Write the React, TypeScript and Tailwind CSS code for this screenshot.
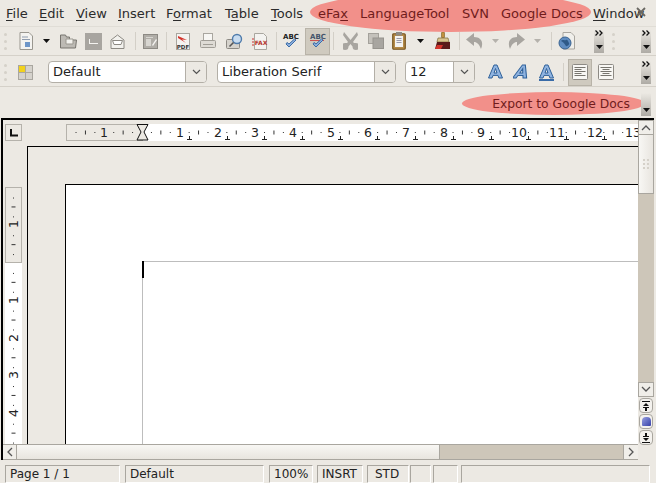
import React from "react";

const Sep = ({ w }: { w: string }) => (
  <div className={`${w} flex justify-center shrink-0`}>
    <div className="w-px h-[18px] bg-[#d3cfc7]" />
  </div>
);

const Grip = () => (
  <div className="flex flex-col gap-[4px]">
    <div className="w-[3px] h-[3px] rounded-full bg-[#d5d1c9]" />
    <div className="w-[3px] h-[3px] rounded-full bg-[#d5d1c9]" />
    <div className="w-[3px] h-[3px] rounded-full bg-[#d5d1c9]" />
  </div>
);

const Drop = ({ dim }: { dim?: boolean }) => (
  <svg width="7" height="4" viewBox="0 0 7 4">
    <path d="M0 0h7L3.5 4z" fill={dim ? "#b5b2ac" : "#111"} />
  </svg>
);

const Chevrons = ({ top = true }: { top?: boolean }) => (
  <div className="w-[10px] h-[23px] shrink-0 flex flex-col items-center justify-between pb-[4px] bg-gradient-to-b from-[#ece9e3] to-[#aeaba5]">
    {top ? (
      <svg width="9" height="6" viewBox="0 0 9 6">
        <path d="M0.5 0.5L3 3L0.5 5.5M4.5 0.5L7 3L4.5 5.5" fill="none" stroke="#111" strokeWidth="1.3" />
      </svg>
    ) : (
      <span />
    )}
    <Drop />
  </div>
);

const Slot = ({ w, children, cls = "" }: { w: string; children?: React.ReactNode; cls?: string }) => (
  <div className={`${w} ${cls} shrink-0 flex items-center justify-center`}>{children}</div>
);

const Icon = ({ children, w = 18, h = 18 }: { children: React.ReactNode; w?: number; h?: number }) => (
  <svg width={w} height={h} viewBox={`0 0 ${w} ${h}`}>{children}</svg>
);

const AbcLabel = ({ red }: { red?: boolean }) => (
  <Icon w={18} h={18}>
    <text x="9" y="6.5" textAnchor="middle" fontSize="7" fontWeight="700" fontFamily="'DejaVu Sans', sans-serif" fill={red ? "#44546a" : "#222"}>ABC</text>
    {red && <path d="M1 8l1 1 1-1 1 1 1-1 1 1 1-1 1 1 1-1 1 1 1-1 1 1 1-1 1 1 1-1" fill="none" stroke="#c33" strokeWidth="0.8" />}
    <path d="M4 12l3 3 7-7-1.5-1-5.5 5-2-1.5z" fill="#8fb0dc" stroke="#3a6ca8" strokeWidth="1" />
  </Icon>
);

const BigA = ({ italic, under }: { italic?: boolean; under?: boolean }) => (
  <Icon w={18} h={18}>
    <g transform={italic ? "translate(3 0) skewX(-18)" : undefined}>
      <path d="M1.5 15L7 2h3l5.5 13h-3.6l-.9-2.6H6L5 15zM7 10h3L8.5 5.5z" fill="#8fb3e0" stroke="#2f6199" strokeWidth="1" />
    </g>
    {under && <rect x="1" y="16" width="15" height="2" fill="#3a6ca8" />}
  </Icon>
);

const AlignIcon = ({ center }: { center?: boolean }) => (
  <Icon w={16} h={16}>
    <rect x="0.5" y="0.5" width="15" height="15" rx="1" fill="#f8f7f4" stroke="#8d8a84" />
    {[3.5, 5.5, 7.5, 9.5, 11.5].map((y, i) => {
      const len = i % 2 ? 7 : 11;
      const x = center ? 8 - len / 2 : 2.5;
      return <line key={y} x1={x} x2={x + len} y1={y} y2={y} stroke="#77756f" strokeWidth="1" />;
    })}
  </Icon>
);

const Combo = ({ label, w, tw }: { label: string; w: string; tw: string }) => (
  <div className={`${w} h-[22px] shrink-0 flex bg-white border border-[#b3afa7] rounded-[4px] overflow-hidden`}>
    <div className="flex-1 pl-[4px] flex items-center text-[13px] text-[#222]">{label}</div>
    <div className={`${tw} shrink-0 flex items-center justify-center bg-[#ece9e3] border-l border-[#b3afa7]`}>
      <svg width="9" height="6" viewBox="0 0 9 6">
        <path d="M1 1l3.5 3.5L8 1" fill="none" stroke="#555" strokeWidth="1.2" />
      </svg>
    </div>
  </div>
);

const MenuItem = ({ w, u, rest, pre = "", red }: { w: string; u: string; rest: string; pre?: string; red?: boolean }) => (
  <div className={`${w} shrink-0 whitespace-nowrap ${red ? "text-[#701c1c]" : "text-[#2b2b2b]"}`}>
    {pre}
    {u && <span className="underline underline-offset-2">{u}</span>}
    {rest}
  </div>
);

const ticksH = () => {
  const out: React.ReactNode[] = [];
  const unit = 37.7;
  const origin = 142;
  for (let i = -2; i <= 13; i++) {
    const x0 = origin + i * unit;
    [0.25, 0.5, 0.75].forEach((f) => {
      const x = x0 + f * unit;
      if (x > 67 && x < 638) {
        out.push(
          f === 0.5 ? (
            <line key={`${i}-${f}`} x1={x - 66} x2={x - 66} y1="6.5" y2="10.5" stroke="#333" strokeWidth="1" />
          ) : (
            <rect key={`${i}-${f}`} x={x - 66.5} y="8" width="1" height="1" fill="#333" />
          )
        );
      }
    });
  }
  for (let x = 189; x < 638; x += 37.7) {
    const rx = Math.round(x) - 66;
    out.push(<path key={`t${x}`} d={`M${rx + 0.5} 12v4M${rx - 2} 15.5h5`} stroke="#222" strokeWidth="1" fill="none" />);
  }
  return out;
};

const labelsH: [string, number][] = [
  ["1", 104], ["1", 180], ["2", 218], ["3", 255], ["4", 293], ["5", 331], ["6", 368],
  ["7", 406], ["8", 444], ["9", 481], ["10", 519], ["11", 557], ["12", 595], ["13", 633],
];

const HRuler = () => (
  <svg width="572" height="18" viewBox="0 0 572 18" className="block shrink-0">
    <rect x="76" y="0" width="496" height="17" fill="#fff" />
    <rect x="0.5" y="0.5" width="76" height="16" fill="#ece9e3" stroke="#b5b2ab" />
    {ticksH()}
    {labelsH.map(([t, x]) => (
      <text key={x} x={x - 66} y="13" textAnchor="middle" fontSize="12.5" fontFamily="'DejaVu Sans', sans-serif" fill="#222">{t}</text>
    ))}
    <path d="M71 0.5h11l-4 7.5 4 8H71l4-8z" fill="#ece9e3" stroke="#111" strokeWidth="1" />
  </svg>
);

const VRuler = () => {
  const items: React.ReactNode[] = [];
  const unit = 37.7;
  for (let i = -2; i < 5; i++) {
    [0.25, 0.5, 0.75].forEach((f) => {
      const y = 117 + i * unit + f * unit + 0.5;
      if (y > 40 && y < 300) {
        items.push(
          f === 0.5 ? (
            <line key={`${i}-${f}`} x1="6.5" x2="10.5" y1={y} y2={y} stroke="#333" />
          ) : (
            <rect key={`${i}-${f}`} x="8" y={y} width="1" height="1" fill="#333" />
          )
        );
      }
    });
  }
  const labels: [string, number][] = [["1", 78], ["1", 154], ["2", 192], ["3", 229], ["4", 267]];
  return (
    <svg width="17" height="301" viewBox="0 0 17 301" className="block">
      <rect x="0" y="117" width="17" height="184" fill="#fff" />
      <rect x="0.5" y="41.5" width="16" height="75" fill="#ece9e3" stroke="#b5b2ab" />
      {items}
      {labels.map(([t, y], i) => (
        <text key={i} x="0" y="0" transform={`translate(13 ${y}) rotate(-90)`} textAnchor="middle" fontSize="12.5" fontFamily="'DejaVu Sans', sans-serif" fill="#222">{t}</text>
      ))}
    </svg>
  );
};

const Cell = ({ w, children, cls = "" }: { w: string; children?: React.ReactNode; cls?: string }) => (
  <div className={`${w} ${cls} h-[18px] shrink-0 flex items-center pl-[4px] border border-t-[#a9a69f] border-l-[#a9a69f] border-r-white border-b-white text-[12px] text-[#222] whitespace-nowrap`}>
    {children}
  </div>
);

const SmallNav = ({ children, cls = "" }: { children: React.ReactNode; cls?: string }) => (
  <div className={`w-[14px] h-[15px] ml-px flex items-center justify-center rounded-[4px] border border-[#a9a69f] bg-[#f4f2ee] ${cls}`}>{children}</div>
);

export default function App() {
  return (
    <div className="relative w-[656px] h-[483px] overflow-hidden bg-[#ece9e3] flex flex-col" style={{ fontFamily: "'DejaVu Sans', sans-serif" }}>
      {/* annotation ellipses */}
      <div className="absolute left-[310px] top-[-8px] w-[281px] h-[40px] rounded-[50%] bg-[#f2908a] z-10" />
      <div className="absolute left-[462px] top-[92px] w-[183px] h-[23px] rounded-[50%] bg-[#f2908a] z-10" />

      {/* menu */}
      <div className="relative z-20 h-[26px] shrink-0 flex items-center pl-[6px] pt-[1px] text-[13px]">
        <MenuItem w="w-[33px]" u="F" rest="ile" />
        <MenuItem w="w-[37px]" u="E" rest="dit" />
        <MenuItem w="w-[42px]" u="V" rest="iew" />
        <MenuItem w="w-[48px]" u="I" rest="nsert" />
        <MenuItem w="w-[59px]" pre="F" u="o" rest="rmat" />
        <MenuItem w="w-[46px]" pre="T" u="a" rest="ble" />
        <MenuItem w="w-[47px]" u="T" rest="ools" />
        <MenuItem w="w-[42px]" pre="eFa" u="x" rest="" red />
        <MenuItem w="w-[102px]" u="" rest="LanguageTool" red />
        <MenuItem w="w-[39px]" u="" rest="SVN" red />
        <MenuItem w="w-[92px]" u="" rest="Google Docs" red />
        <MenuItem w="w-[44px]" u="W" rest="indow" />
        <div className="absolute left-[636px] top-[6px]">
          <svg width="10" height="12" viewBox="0 0 10 12">
            <path d="M1 2l8 8M9 2l-8 8" stroke="#6a6862" strokeWidth="1.8" />
          </svg>
        </div>
      </div>

      {/* toolbar 1 */}
      <div className="h-[30px] shrink-0 flex items-center border-t border-[#e0ddd6] border-b border-b-[#d5d1c9]">
        <Slot w="w-[14px]" cls="!justify-start pl-[4px]"><Grip /></Slot>
        <Slot w="w-[23px]">
          <Icon w={14} h={18}>
            <path d="M1 .5h9l3.5 3.5v13.5H1z" fill="#f4f3f0" stroke="#9a978f" />
            <path d="M3 5h6M3 7.5h8" stroke="#8f9cae" />
            <rect x="6" y="10" width="5" height="5" fill="#6e96c8" />
          </Icon>
        </Slot>
        <Slot w="w-[18px]"><Drop /></Slot>
        <Slot w="w-[26px]">
          <Icon w={17} h={15}>
            <path d="M.5 14V1h5l1 2h3v3h7l-1 8z" fill="#bdbab4" stroke="#77746e" />
            <path d="M6 5h7v5H6z" fill="#f3f2ee" stroke="#9a978f" />
          </Icon>
        </Slot>
        <Slot w="w-[24px]">
          <div className="w-[17px] h-[17px] bg-[#a8a5a0] relative flex items-start justify-center">
            <div className="w-[9px] h-[5px] mt-[6px] border-l border-b border-[#f4f3f0]" />
          </div>
        </Slot>
        <Slot w="w-[24px]">
          <Icon w={15} h={15}>
            <path d="M1 6L7.5 1 14 6v8.5H1z" fill="#f2f1ed" stroke="#8d8a84" />
            <path d="M2.5 6.5h10L11 10.5H4z" fill="#fff" stroke="#8d8a84" />
          </Icon>
        </Slot>
        <Sep w="w-[12px]" />
        <Slot w="w-[18px]">
          <Icon w={15} h={15}>
            <rect x=".5" y=".5" width="14" height="14" fill="#b0ada7" stroke="#8d8a84" />
            <path d="M3 3h7v1H3zM3 5h5v7H3z" fill="#d8d6d1" />
            <path d="M9 11l4-6 1 1-4 6z" fill="#f4f3f0" />
          </Icon>
        </Slot>
        <Sep w="w-[14px]" />
        <Slot w="w-[20px]">
          <Icon w={14} h={17}>
            <rect x=".5" y=".5" width="13" height="16" fill="#f4f3f0" stroke="#a9a69f" />
            <path d="M2 3l9 4-5-.5 4 3.5-8-5z" fill="#d4342c" />
            <text x="7" y="15.5" textAnchor="middle" fontSize="5.5" fontWeight="700" fontFamily="'DejaVu Sans', sans-serif" fill="#333">PDF</text>
          </Icon>
        </Slot>
        <Slot w="w-[30px]">
          <Icon w={16} h={16}>
            <rect x="3.5" y=".5" width="9" height="7" fill="#f7f6f3" stroke="#a9a69f" />
            <rect x=".5" y="7.5" width="15" height="7" rx="1" fill="#dedbd5" stroke="#a09d96" />
            <path d="M3 11.5h10" stroke="#a09d96" />
          </Icon>
        </Slot>
        <Slot w="w-[24px]">
          <Icon w={18} h={17}>
            <rect x=".5" y="6.5" width="13" height="9" rx="1" fill="#d5d2cc" stroke="#8d8a84" />
            <circle cx="11" cy="6" r="4.5" fill="#c8dcf0" stroke="#4f7bab" strokeWidth="1.4" />
            <path d="M7.5 9.5l-4 4" stroke="#555" strokeWidth="1.6" />
          </Icon>
        </Slot>
        <Slot w="w-[26px]">
          <Icon w={17} h={17}>
            <path d="M2.5.5h9l3 3v13h-12z" fill="#f4f3f0" stroke="#a9a69f" />
            <text x="9" y="12" textAnchor="middle" fontSize="6" fontWeight="700" fontFamily="'DejaVu Sans', sans-serif" fill="#b5332e">FAX</text>
            <path d="M0 6h2M0 9h2M0 12h2" stroke="#c33" />
          </Icon>
        </Slot>
        <Sep w="w-[6px]" />
        <Slot w="w-[24px]"><AbcLabel /></Slot>
        <Slot w="w-[25px]" cls="ml-[2px] h-[27px] bg-[#cfcabf] border border-[#b8b3a8]"><AbcLabel red /></Slot>
        <Sep w="w-[6px]" />
        <Slot w="w-[28px]">
          <Icon w={15} h={18}>
            <path d="M1 0l6.5 8L14 0l1 3-5 7 1 1h2a3.5 3.5 0 1 1-3.5 3.5L7.5 12 5.500 14.500A3.500 3.500 0 1 1 2 11h2l1-1-5-7z" fill="#a8a5a0" />
          </Icon>
        </Slot>
        <Slot w="w-[23px]">
          <Icon w={16} h={16}>
            <rect x=".5" y=".5" width="10" height="10" fill="#c4c1bb" stroke="#a4a19b" />
            <rect x="5" y="5" width="10.5" height="10.5" fill="#a8a5a0" stroke="#96938d" />
          </Icon>
        </Slot>
        <Slot w="w-[24px]">
          <Icon w={14} h={18}>
            <rect x=".75" y="1.75" width="12.5" height="15.500" rx="1" fill="#b48a48" stroke="#76531e" strokeWidth="1.2" />
            <rect x="3" y="4" width="8" height="11" fill="#f4f3f0" />
            <rect x="4" y="0" width="6" height="3.5" fill="#8d8a84" />
            <path d="M4.5 6.5h5M4.5 8.5h5M4.5 10.5h5" stroke="#99a" />
          </Icon>
        </Slot>
        <Slot w="w-[18px]"><Drop /></Slot>
        <Slot w="w-[28px]">
          <Icon w={16} h={18}>
            <rect x="6.5" y="0" width="3" height="6" rx="1" fill="#c2913f" stroke="#7b5c22" strokeWidth=".6" />
            <path d="M3 6h10l1 4H2z" fill="#d9c48e" stroke="#7b6a3a" strokeWidth=".7" />
            <path d="M2 10h13v7H0z" fill="#5a1a1a" />
            <path d="M0 17l2-4h6l-2 4z" fill="#d4342c" />
          </Icon>
        </Slot>
        <Sep w="w-[4px]" />
        <Slot w="w-[26px]">
          <Icon w={17} h={16}>
            <path d="M8 0L0 6.500l8 6.500V9c3 0 5 2 7 7 3-7 0-12-7-12z" fill="#a8a5a0" />
          </Icon>
        </Slot>
        <Slot w="w-[16px]"><Drop dim /></Slot>
        <Slot w="w-[26px]">
          <Icon w={17} h={16}>
            <path d="M9 0l8 6.500L9 13V9c-3 0-5 2-7 7C-1 9 2 4 9 4z" fill="#a8a5a0" />
          </Icon>
        </Slot>
        <Slot w="w-[16px]"><Drop dim /></Slot>
        <Sep w="w-[12px]" />
        <Slot w="w-[18px]">
          <Icon w={17} h={18}>
            <path d="M5 .5h8l3.500 3.500v13H5z" fill="#f0efeb" stroke="#a9a69f" />
            <circle cx="7" cy="11" r="6" fill="#5f8cc0" stroke="#3a6492" />
            <path d="M3 9c2-2 3 0 5-1s2 2 3 3-2 4-3 3-1-3-5-5z" fill="#2f5a88" />
          </Icon>
        </Slot>
        <div className="w-[19px] shrink-0" />
        <Chevrons />
        <Slot w="w-[18px]"><Grip /></Slot>
        <div className="w-[19px] shrink-0" />
        <Chevrons />
      </div>

      {/* toolbar 2 */}
      <div className="h-[31px] shrink-0 flex items-center pt-[2px] border-b border-[#d5d1c9]">
        <Slot w="w-[14px]" cls="!justify-start pl-[4px]"><Grip /></Slot>
        <Slot w="w-[23px]">
          <div className="grid grid-cols-2 gap-px w-[15px] h-[15px] bg-[#a9a69f] border border-[#a9a69f]">
            <div className="bg-[#f2d21c]" />
            <div className="bg-[#d5d2cc]" />
            <div className="bg-[#d5d2cc]" />
            <div className="bg-[#d5d2cc]" />
          </div>
        </Slot>
        <div className="w-[11px] shrink-0" />
        <Combo label="Default" w="w-[159px]" tw="w-[21px]" />
        <div className="w-[10px] shrink-0" />
        <Combo label="Liberation Serif" w="w-[179px]" tw="w-[21px]" />
        <div className="w-[9px] shrink-0" />
        <Combo label="12" w="w-[70px]" tw="w-[21px]" />
        <Slot w="w-[21px]" cls="ml-[10px]"><BigA /></Slot>
        <Slot w="w-[27px]" cls="ml-[2px]"><BigA italic /></Slot>
        <Slot w="w-[23px]"><BigA under /></Slot>
        <Sep w="w-[10px]" />
        <Slot w="w-[24px]" cls="h-[27px] bg-[#cfcabf] border border-[#b8b3a8]"><AlignIcon /></Slot>
        <Slot w="w-[27px]"><AlignIcon center /></Slot>
        <div className="w-[22px] shrink-0" />
        <Chevrons />
      </div>

      {/* toolbar 3 */}
      <div className="relative z-20 h-[31px] shrink-0 flex items-center justify-end pr-[5px]">
        <div className="text-[12.3px] pt-[3px] text-[#701c1c] mr-[11px] whitespace-nowrap">Export to Google Docs</div>
        <div className="self-end mb-[2px]"><Chevrons top={false} /></div>
      </div>

      {/* editor */}
      <div className="flex-1 min-h-0 flex flex-col pl-[1px] pr-[2px]">
        <div className="flex-1 min-h-0 flex border-t-2 border-l-2 border-black">
          <div className="flex-1 min-w-0 flex flex-col">
            {/* horizontal ruler row */}
            <div className="h-[26px] shrink-0 flex pt-[4px]">
              <div className="ml-[2px] w-[17px] h-[17px] flex items-center justify-center border border-[#b5b2ab] shrink-0">
                <svg width="8" height="8" viewBox="0 0 8 8"><path d="M1 0v6.5h7" fill="none" stroke="#111" strokeWidth="2" /></svg>
              </div>
              <div className="ml-[44px]"><HRuler /></div>
            </div>
            {/* work row */}
            <div className="flex-1 min-h-0 flex">
              <div className="w-[24px] shrink-0 pl-[2px] overflow-hidden"><VRuler /></div>
              <div className="flex-1 min-w-0 border-t border-l border-black pl-[37px] pt-[37px]">
                <div className="h-full border-t border-l border-black bg-white pl-[76px] pt-[76px]">
                  <div className="relative h-full border-t border-l border-[#bdbdbd]">
                    <div className="absolute left-[-1px] top-[-1px] w-[2px] h-[17px] bg-black" />
                  </div>
                </div>
              </div>
            </div>
            {/* horizontal scrollbar */}
            <div className="h-[16px] shrink-0 flex border-t border-b border-[#a9a69f]">
              <div className="w-[14px] shrink-0 flex items-center justify-center bg-[#f0eee9] border-r border-[#a9a69f]">
                <svg width="7" height="10" viewBox="0 0 7 10"><path d="M6 1L2 5l4 4" fill="none" stroke="#555" strokeWidth="1.3" /></svg>
              </div>
              <div className="w-[423px] shrink-0 bg-gradient-to-b from-[#f8f7f4] to-[#e8e5df] border-r border-[#a9a69f]" />
              <div className="flex-1 bg-[#cdc6b9]" />
              <div className="w-[15px] shrink-0 flex items-center justify-center bg-[#f0eee9] border-l border-[#a9a69f]">
                <svg width="7" height="10" viewBox="0 0 7 10"><path d="M1 1l4 4-4 4" fill="none" stroke="#555" strokeWidth="1.3" /></svg>
              </div>
            </div>
          </div>
          {/* vertical scrollbar */}
          <div className="w-[16px] shrink-0 flex flex-col pb-[15px]">
            <div className="h-[15px] shrink-0 flex items-center justify-center bg-[#f0eee9] border border-[#a9a69f]">
              <svg width="10" height="7" viewBox="0 0 10 7"><path d="M1 6l4-4 4 4" fill="none" stroke="#555" strokeWidth="1.3" /></svg>
            </div>
            <div className="h-[59px] shrink-0 flex items-center justify-center bg-gradient-to-r from-[#f8f7f4] to-[#e8e5df] border-x border-b border-[#a9a69f]">
              <div className="grid grid-cols-2 gap-[2px]">
                {[0, 1, 2, 3, 4, 5].map((i) => (
                  <div key={i} className="w-[2px] h-[2px] bg-[#d5d1c9]" />
                ))}
              </div>
            </div>
            <div className="flex-1 min-h-0 bg-[#cdc6b9]" />
            <div className="h-[15px] shrink-0 flex items-center justify-center bg-[#f0eee9] border border-[#a9a69f]">
              <svg width="10" height="7" viewBox="0 0 10 7"><path d="M1 1l4 4 4-4" fill="none" stroke="#555" strokeWidth="1.3" /></svg>
            </div>
            <div className="flex flex-col gap-px pt-px">
              <SmallNav>
                <svg width="8" height="10" viewBox="0 0 8 10"><path d="M0 0h8v1H0zM4 2l3 3H1zM1 6h6v1H1zM3 7h2v3H3z" fill="#111" /></svg>
              </SmallNav>
              <SmallNav>
                <div className="w-[9px] h-[9px] rounded-t-[4px] rounded-b-[1px] bg-gradient-to-br from-[#9aa0e0] to-[#3a40a8]" />
              </SmallNav>
              <SmallNav>
                <svg width="8" height="10" viewBox="0 0 8 10"><path d="M3 0h2v3H3zM1 3h6v1H1zM1 5h6L4 8zM0 9h8v1H0z" fill="#111" /></svg>
              </SmallNav>
            </div>
          </div>
        </div>
      </div>

      {/* status bar */}
      <div className="h-[23px] shrink-0 flex items-end pl-[5px]">
        <Cell w="w-[115px]">Page 1 / 1</Cell>
        <Cell w="w-[139px]" cls="ml-[5px]">Default</Cell>
        <Cell w="w-[44px]" cls="ml-[5px]">100%</Cell>
        <Cell w="w-[46px]" cls="ml-[4px]">INSRT</Cell>
        <Cell w="w-[42px]" cls="ml-[4px] pl-[7px]">STD</Cell>
        <Cell w="w-[21px]" cls="ml-[1px]" />
        <Cell w="w-[25px]" cls="ml-[2px]" />
        <Cell w="w-[189px]" cls="ml-[3px]" />
      </div>
    </div>
  );
}
